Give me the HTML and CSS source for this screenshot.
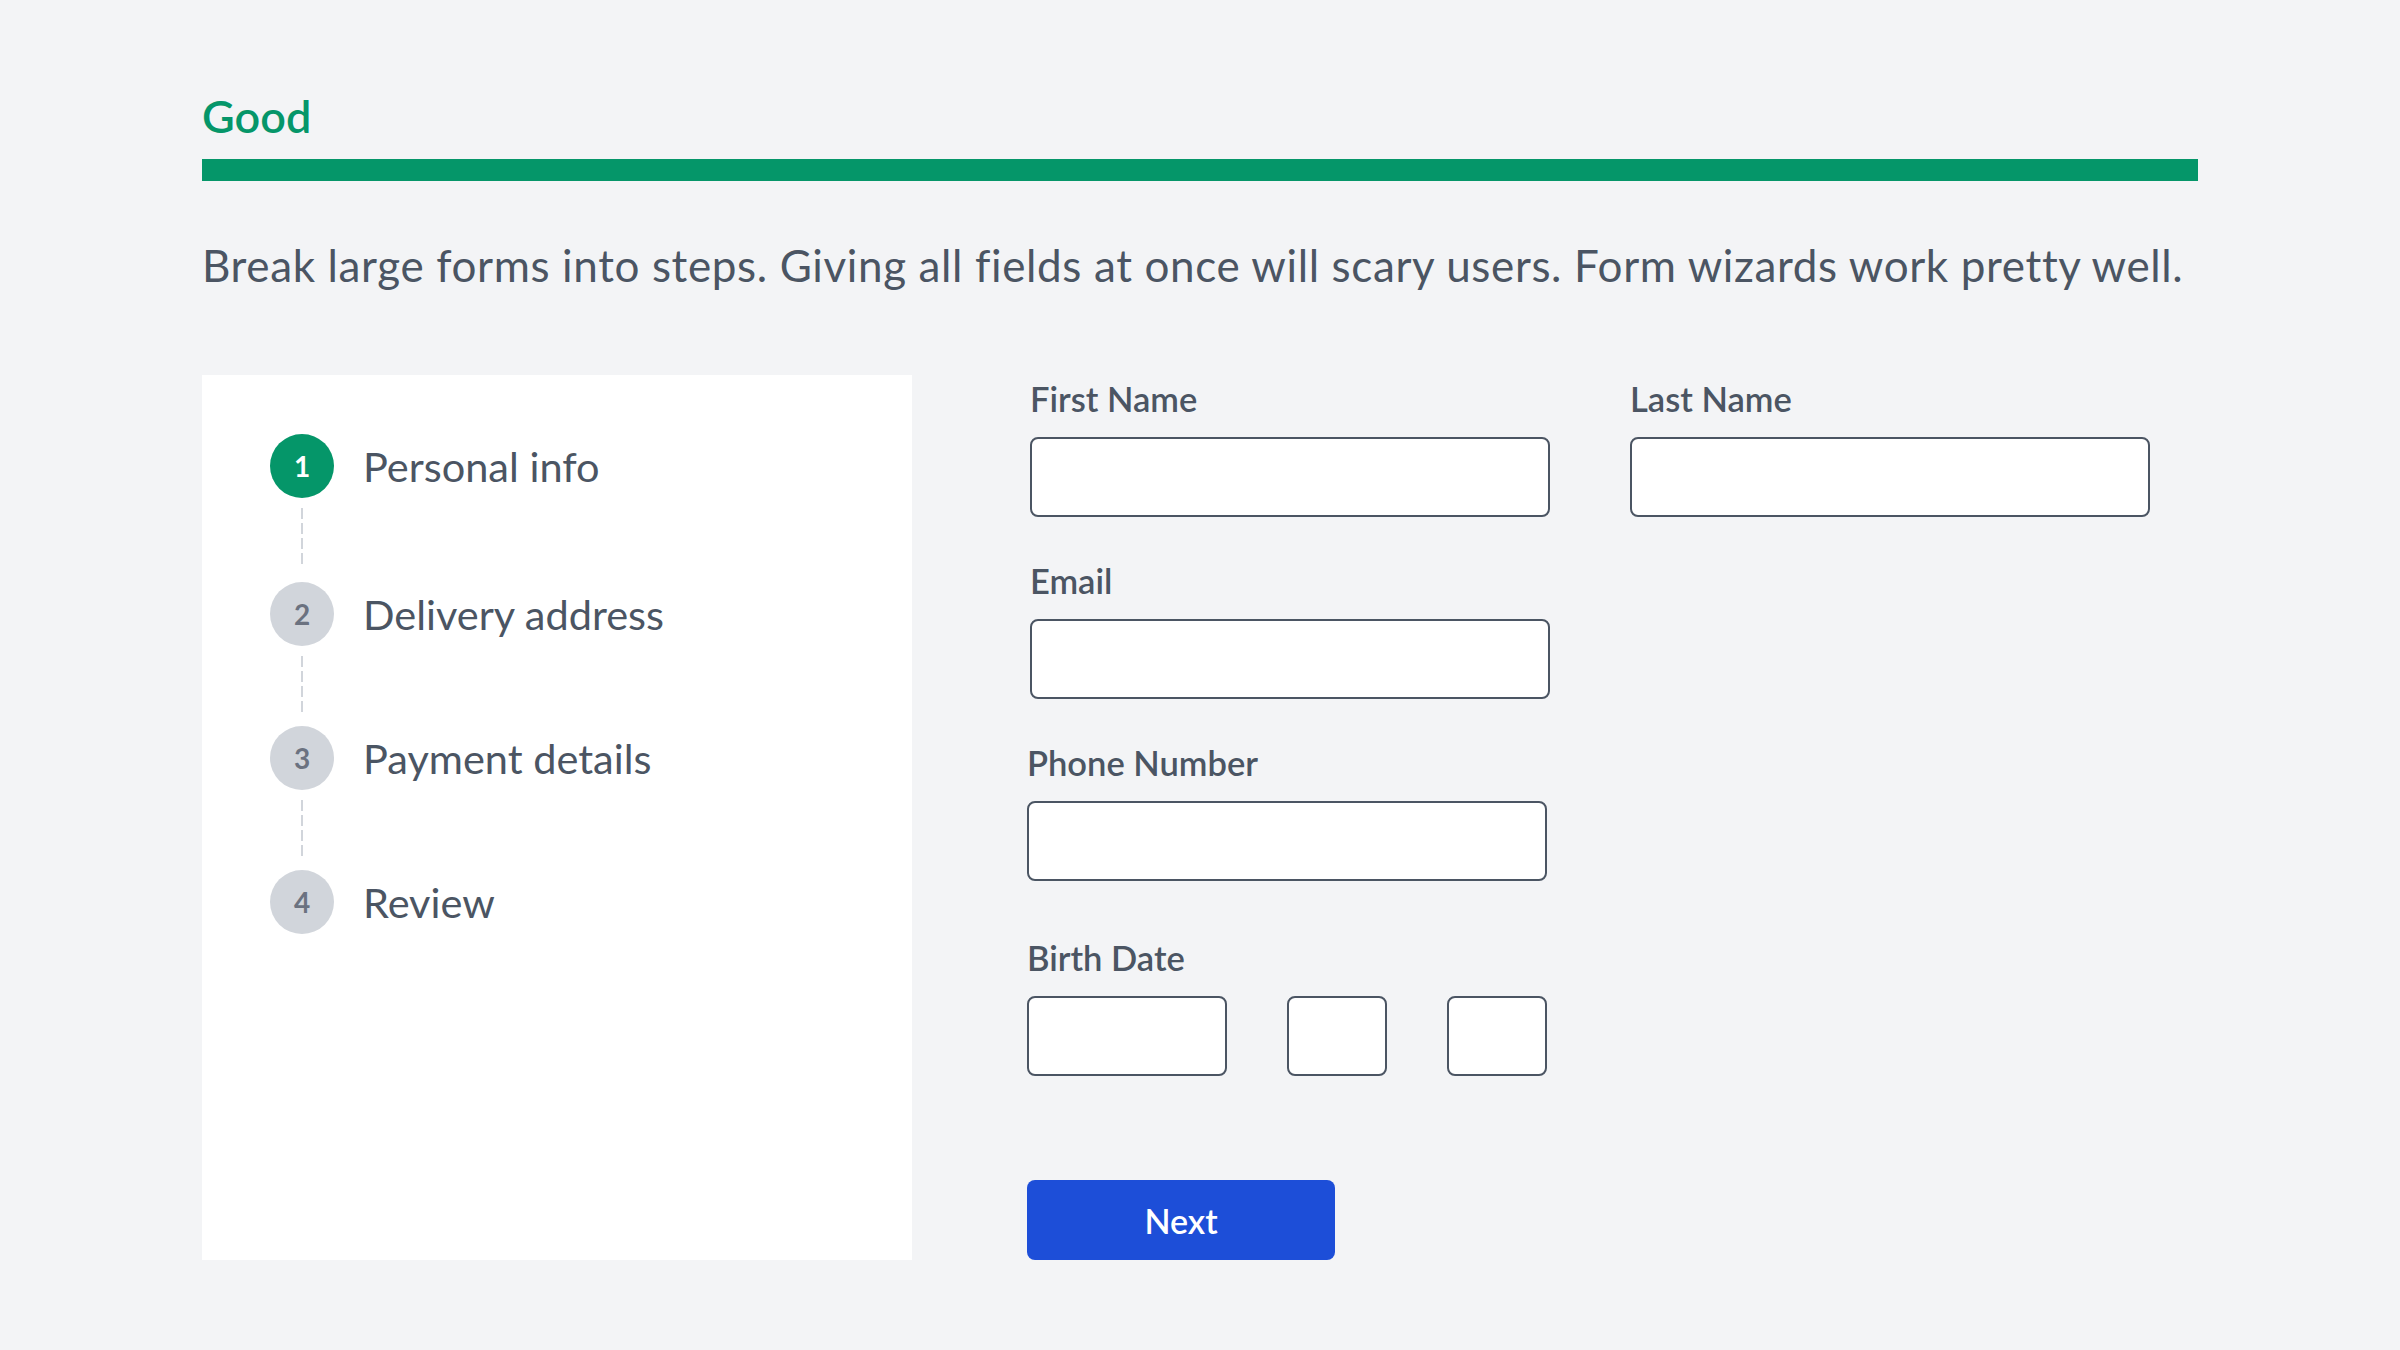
FILE: index.html
```html
<!DOCTYPE html>
<html lang="en">
<head>
<meta charset="utf-8">
<title>Good - Form wizard</title>
<link rel="stylesheet" href="styles.css">
</head>
<body>
<main class="page">
  <h1 class="verdict">Good</h1>
  <div class="verdict-bar"></div>
  <p class="lead">Break large forms into steps. Giving all fields at once will scary users. Form wizards work pretty well.</p>

  <section class="demo">
    <aside class="steps-card">
      <ol class="steps">
        <li class="step step-active"><span class="step-num">1</span><span class="step-label">Personal info</span></li>
        <li class="connector connector-first"></li>
        <li class="step"><span class="step-num">2</span><span class="step-label">Delivery address</span></li>
        <li class="connector"></li>
        <li class="step"><span class="step-num">3</span><span class="step-label">Payment details</span></li>
        <li class="connector"></li>
        <li class="step"><span class="step-num">4</span><span class="step-label">Review</span></li>
      </ol>
    </aside>

    <form class="form">
      <div class="row-two shift">
        <div class="field">
          <label class="field-label">First Name</label>
          <div class="input input-wide"></div>
        </div>
        <div class="field">
          <label class="field-label">Last Name</label>
          <div class="input input-wide"></div>
        </div>
      </div>
      <div class="field shift gap-row">
        <label class="field-label">Email</label>
        <div class="input input-wide"></div>
      </div>
      <div class="field gap-row">
        <label class="field-label">Phone Number</label>
        <div class="input input-wide"></div>
      </div>
      <div class="field gap-birth">
        <label class="field-label">Birth Date</label>
        <div class="date-row">
          <div class="input input-year"></div>
          <div class="input input-small"></div>
          <div class="input input-small"></div>
        </div>
      </div>
      <button type="button" class="btn-next">Next</button>
    </form>
  </section>
</main>
</body>
</html>
```

FILE: styles.css
```css
* { box-sizing: border-box; }

html, body {
  margin: 0;
  padding: 0;
  background: #f3f4f6;
}

body {
  font-family: Lato, "Liberation Sans", sans-serif;
  color: #4b5563;
}

.page {
  width: 2400px;
  padding: 89px 202px 0 202px;
}

.verdict {
  margin: 0;
  font-size: 45px;
  line-height: 54px;
  font-weight: 600;
  color: #059669;
}

.verdict-bar {
  margin-top: 16px;
  width: 1996px;
  height: 22px;
  background: #059669;
}

.lead {
  margin: 58px 0 0 0;
  font-size: 44px;
  line-height: 53px;
  font-weight: 400;
  letter-spacing: 0.63px;
  color: #4b5563;
  white-space: nowrap;
  font-variant-ligatures: none;
}

.demo {
  margin-top: 83px;
  display: flex;
  align-items: flex-start;
}

.steps-card {
  width: 710px;
  height: 885px;
  background: #ffffff;
  padding: 59px 0 0 68px;
}

.steps {
  list-style: none;
  margin: 0;
  padding: 0;
}

.step {
  display: flex;
  align-items: center;
  height: 64px;
}

.step-num {
  width: 64px;
  height: 64px;
  border-radius: 50%;
  background: #d1d5db;
  color: #6b7280;
  display: flex;
  align-items: center;
  justify-content: center;
  font-size: 28px;
  font-weight: 700;
  flex: none;
}

.step-active .step-num {
  background: #059669;
  color: #ffffff;
}

.step-label {
  margin-left: 29px;
  font-size: 41.5px;
  line-height: 50px;
  color: #4b5563;
}

.connector {
  width: 2px;
  height: 56px;
  margin: 10px 0 14px 31px;
  background: repeating-linear-gradient(to bottom, #d1d5db 0 11px, transparent 11px 15px);
}

.connector-first {
  margin-bottom: 18px;
}

.form {
  margin: 4px 0 0 115px;
  display: flex;
  flex-direction: column;
}

.shift { margin-left: 3px; }

.row-two {
  display: flex;
  gap: 80px;
}

.field {
  display: flex;
  flex-direction: column;
}

.gap-row { margin-top: 44px; }
.gap-birth { margin-top: 57px; }

.field-label {
  display: block;
  font-size: 34.5px;
  line-height: 40px;
  font-weight: 600;
  color: #4b5563;
  margin-bottom: 18px;
}

.input {
  height: 80px;
  background: #ffffff;
  border: 2px solid #4b5563;
  border-radius: 8px;
}

.input-wide { width: 520px; }

.date-row {
  display: flex;
  gap: 60px;
}

.input-year { width: 200px; }
.input-small { width: 100px; }

.btn-next {
  margin-top: 104px;
  width: 308px;
  height: 80px;
  border: none;
  border-radius: 8px;
  background: #1d4ed8;
  color: #ffffff;
  font-family: Lato, "Liberation Sans", sans-serif;
  font-size: 34px;
  font-weight: 600;
  padding: 0;
  cursor: pointer;
}
```
